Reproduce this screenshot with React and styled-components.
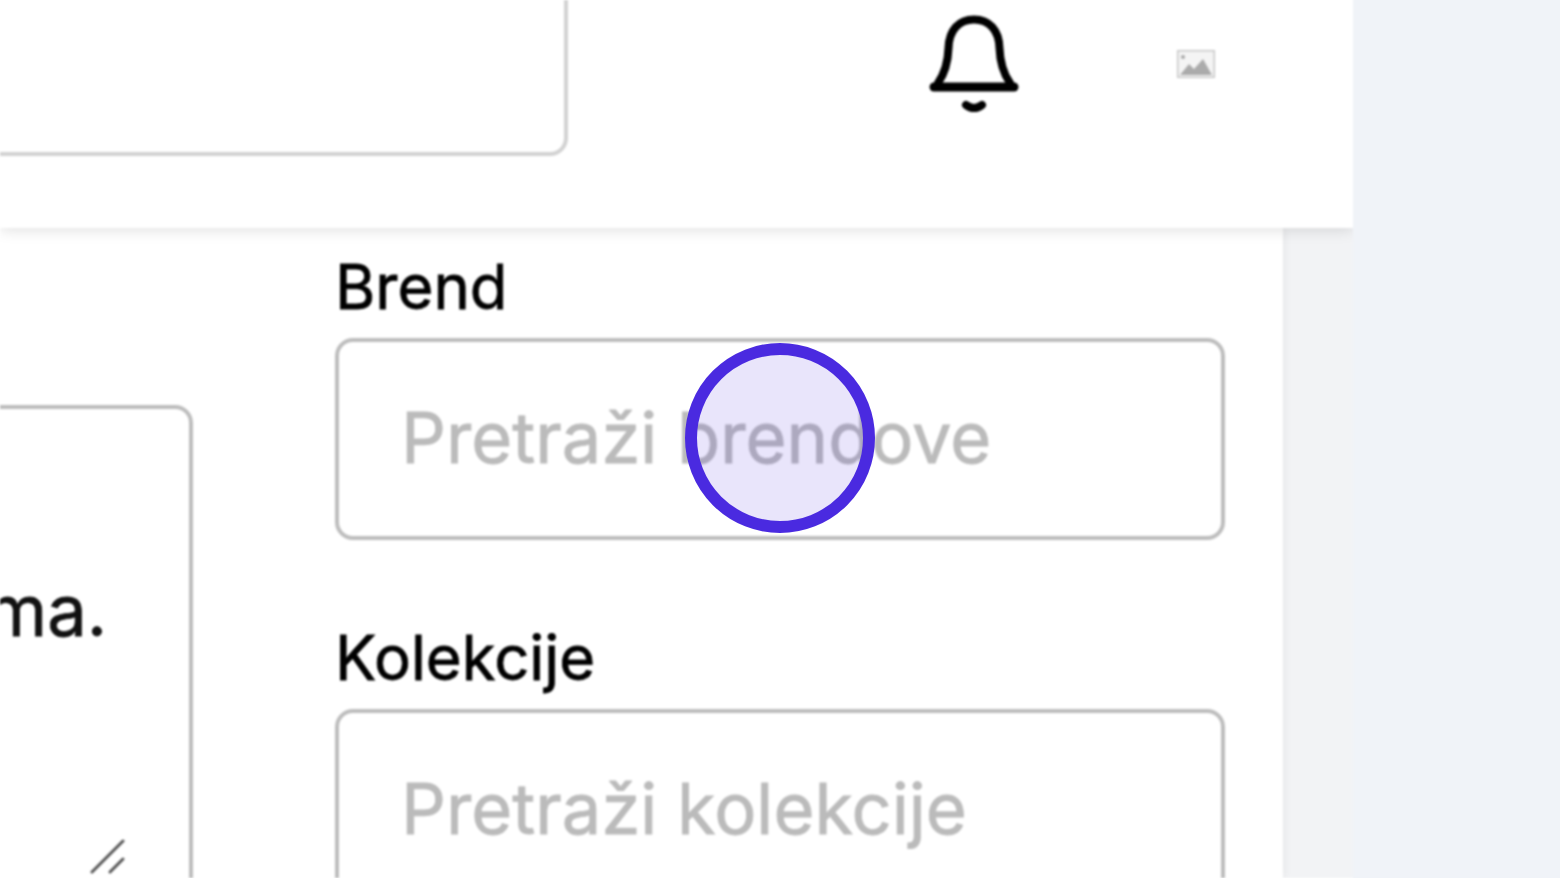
import styled, { createGlobalStyle } from 'styled-components';

const GlobalStyle = createGlobalStyle`
  html, body {
    margin: 0;
    padding: 0;
    background: #f0f3f8;
    font-family: Inter, "Liberation Sans", sans-serif;
  }
`;

const Page = styled.div`
  display: flex;
  align-items: flex-start;
  width: 1560px;
  height: 878px;
  overflow: hidden;
  background: #f0f3f8;
`;
/* the screen recording is soft, so the page is blurred; 4px bleed keeps the blurred edge off screen */
const Main = styled.main`
  display: flex;
  flex-direction: column;
  width: 1357px;
  height: 886px;
  margin: -4px 0 0 -4px;
  padding: 4px 0 4px 4px;
  box-sizing: border-box;
  flex-shrink: 0;
  background: #fff;
  filter: blur(0.8px);
`;
const Header = styled.header`
  position: relative;
  z-index: 2;
  display: flex;
  align-items: flex-start;
  height: 228px;
  flex-shrink: 0;
  background: #fff;
  box-shadow: 0 2px 14px rgba(0, 0, 0, 0.13);
  clip-path: inset(0 0 -30px 0);
`;
const SearchBox = styled.div`
  width: 701px;
  height: 301px;
  margin: -145px 0 0 -133px;
  box-sizing: border-box;
  border: 4px solid #d2d2d2;
  border-radius: 18px;
  background: #fff;
`;
const BellIcon = styled.svg`
  width: 100px;
  height: 110px;
  margin: 10px 0 0 357px;
  fill: none;
  stroke: #000;
  stroke-linecap: round;
  stroke-linejoin: round;
`;
const PictureIcon = styled.svg`
  width: 38px;
  height: 29px;
  margin: 50px 0 0 152px;
`;
const Content = styled.div`
  display: flex;
  flex: 1;
  min-height: 0;
  background: #f2f3f5;
`;
const Panel = styled.section`
  display: flex;
  align-items: flex-start;
  gap: 142px;
  width: 1283px;
  flex-shrink: 0;
  background: #fff;
  box-shadow: 0 0 10px rgba(0, 0, 0, 0.07);
  clip-path: inset(0 -30px 0 0);
`;
const TextBox = styled.div`
  position: relative;
  display: flex;
  align-items: flex-start;
  justify-content: flex-end;
  width: 500px;
  height: 600px;
  margin: 177px 0 0 -307px;
  padding: 167px 82px 0 0;
  box-sizing: border-box;
  flex-shrink: 0;
  border: 4px solid #bdbdbd;
  border-radius: 18px;
  background: #fff;
  font-size: 70.4px;
  line-height: 1;
  color: #111;
  white-space: nowrap;
  -webkit-text-stroke: 0.8px #111;
`;
const ResizeHandle = styled.svg`
  position: absolute;
  left: 393px;
  top: 430px;
  width: 36px;
  height: 38px;
  fill: none;
  stroke: #555;
  stroke-width: 3;
  stroke-linecap: round;
`;
const Fields = styled.div`
  display: flex;
  flex-direction: column;
  gap: 83px;
  width: 890px;
  margin-top: 24px;
`;
const Field = styled.div`
  display: flex;
  flex-direction: column;
  gap: 16px;
`;
const Label = styled.label`
  font-size: 61.6px;
  line-height: 70px;
  color: #000;
  -webkit-text-stroke: 0.8px #000;
`;
const Input = styled.div`
  display: flex;
  align-items: center;
  height: 202px;
  padding: 0 0 4px 62px;
  box-sizing: border-box;
  border: 4px solid #bdbdbd;
  border-radius: 18px;
  background: #fff;
  font-size: 70.4px;
  color: #bbb;
  -webkit-text-stroke: 0.8px #bbb;
`;
const ClickMarker = styled.div`
  position: absolute;
  left: 685px;
  top: 343px;
  z-index: 3;
  width: 190px;
  height: 190px;
  box-sizing: border-box;
  border: 12px solid #4a2ae0;
  border-radius: 50%;
  background: rgba(74, 42, 224, 0.12);
`;

export default function App() {
  return (
    <Page>
      <GlobalStyle />
      <Main>
        <Header>
          <SearchBox />
          <BellIcon viewBox="0 0 100 110">
            <path strokeWidth="8" d="M13 73C20 63 23 52 23.5 38C24 20 34 9.5 49 9.5C64 9.5 74 20 74.5 38C75 52 78 63 85 73" />
            <path strokeWidth="9" d="M9 77H89" />
            <path strokeWidth="8" d="M41 95Q49 101 57 95" />
          </BellIcon>
          <PictureIcon viewBox="0 0 38 29">
            <rect x="0.75" y="0.75" width="36.5" height="26.5" fill="#f4f4f4" stroke="#c8c8c8" strokeWidth="1.5" />
            <circle cx="6" cy="7" r="2" fill="#a8a8a8" />
            <path d="M3 25L12 14L17 19L26 9L35 25Z" fill="#ababab" />
          </PictureIcon>
        </Header>
        <Content>
          <Panel>
            <TextBox>
              ma.
              <ResizeHandle viewBox="0 0 36 38">
                <path d="M2 33L33 2" />
                <path d="M20 33L33 20" />
              </ResizeHandle>
            </TextBox>
            <Fields>
              <Field>
                <Label>Brend</Label>
                <Input>Pretraži brendove</Input>
              </Field>
              <Field>
                <Label>Kolekcije</Label>
                <Input>Pretraži kolekcije</Input>
              </Field>
            </Fields>
          </Panel>
        </Content>
      </Main>
      <ClickMarker />
    </Page>
  );
}
